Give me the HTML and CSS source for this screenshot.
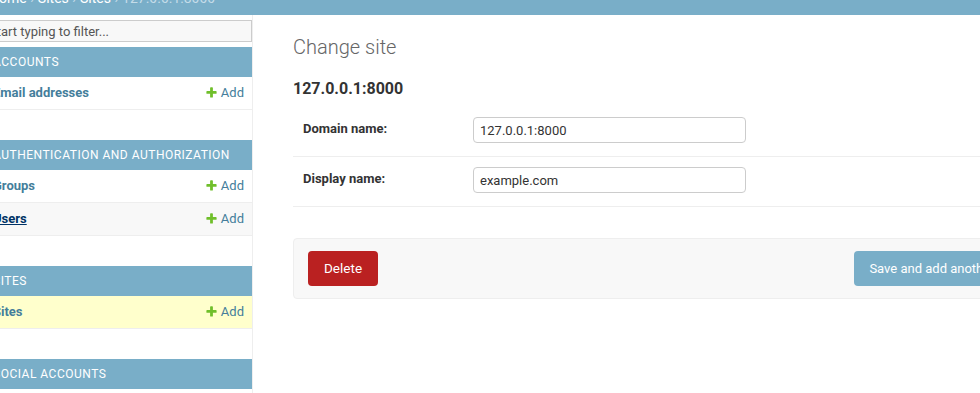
FILE: index.html
```html
<!DOCTYPE html>
<html lang="en">
<head>
<meta charset="utf-8">
<title>Change site | Django site admin</title>
<link rel="stylesheet" href="styles.css">
</head>
<body>
<div class="page">
  <div class="breadcrumbs">
    <a href="#">Home</a> › <a href="#">Sites</a> › <a href="#">Sites</a> › 127.0.0.1:8000
  </div>
  <div class="main">
    <nav class="sidebar">
      <input class="nav-filter" type="search" placeholder="Start typing to filter...">
      <div class="module">
        <div class="caption"><a href="#">Accounts</a></div>
        <div class="model-row">
          <a class="model-link" href="#">Email addresses</a>
          <a class="addlink" href="#"><svg width="13" height="13" viewBox="0 0 1792 1792"><path fill="#70bf2b" d="M1600 796v192q0 40-28 68t-68 28h-416v416q0 40-28 68t-68 28h-192q-40 0-68-28t-28-68v-416h-416q-40 0-68-28t-28-68v-192q0-40 28-68t68-28h416v-416q0-40 28-68t68-28h192q40 0 68 28t28 68v416h416q40 0 68 28t28 68z"/></svg>Add</a>
        </div>
      </div>
      <div class="module">
        <div class="caption"><a href="#">Authentication and Authorization</a></div>
        <div class="model-row">
          <a class="model-link" href="#">Groups</a>
          <a class="addlink" href="#"><svg width="13" height="13" viewBox="0 0 1792 1792"><path fill="#70bf2b" d="M1600 796v192q0 40-28 68t-68 28h-416v416q0 40-28 68t-68 28h-192q-40 0-68-28t-28-68v-416h-416q-40 0-68-28t-28-68v-192q0-40 28-68t68-28h416v-416q0-40 28-68t68-28h192q40 0 68 28t28 68v416h416q40 0 68 28t28 68z"/></svg>Add</a>
        </div>
        <div class="model-row hovered">
          <a class="model-link" href="#">Users</a>
          <a class="addlink" href="#"><svg width="13" height="13" viewBox="0 0 1792 1792"><path fill="#70bf2b" d="M1600 796v192q0 40-28 68t-68 28h-416v416q0 40-28 68t-68 28h-192q-40 0-68-28t-28-68v-416h-416q-40 0-68-28t-28-68v-192q0-40 28-68t68-28h416v-416q0-40 28-68t68-28h192q40 0 68 28t28 68v416h416q40 0 68 28t28 68z"/></svg>Add</a>
        </div>
      </div>
      <div class="module">
        <div class="caption"><a href="#">Sites</a></div>
        <div class="model-row current">
          <a class="model-link" href="#">Sites</a>
          <a class="addlink" href="#"><svg width="13" height="13" viewBox="0 0 1792 1792"><path fill="#70bf2b" d="M1600 796v192q0 40-28 68t-68 28h-416v416q0 40-28 68t-68 28h-192q-40 0-68-28t-28-68v-416h-416q-40 0-68-28t-28-68v-192q0-40 28-68t68-28h416v-416q0-40 28-68t68-28h192q40 0 68 28t28 68v416h416q40 0 68 28t28 68z"/></svg>Add</a>
        </div>
      </div>
      <div class="module">
        <div class="caption"><a href="#">Social Accounts</a></div>
        <div class="model-row">
          <a class="model-link" href="#">Social accounts</a>
          <a class="addlink" href="#">Add</a>
        </div>
      </div>
    </nav>
    <div class="content">
      <h1>Change site</h1>
      <h2>127.0.0.1:8000</h2>
      <fieldset class="fields">
        <div class="form-row">
          <label class="required" for="id_domain">Domain name:</label>
          <input class="text-field" id="id_domain" type="text" value="127.0.0.1:8000">
        </div>
        <div class="form-row">
          <label class="required" for="id_name">Display name:</label>
          <input class="text-field" id="id_name" type="text" value="example.com">
        </div>
      </fieldset>
      <div class="submit-row">
        <a class="deletelink" href="#">Delete</a>
        <div class="save-group">
          <button class="btn" type="button">Save and add another</button>
          <button class="btn" type="button">Save and continue editing</button>
          <button class="btn default" type="button">SAVE</button>
        </div>
      </div>
    </div>
  </div>
</div>
</body>
</html>
```

FILE: styles.css
```css
html, body {
  margin: 0;
  padding: 0;
  overflow: hidden;
  background: #fff;
}

body {
  font-family: Roboto, "Liberation Sans", Arial, sans-serif;
  font-size: 14px;
  color: #333;
}

a {
  text-decoration: none;
  color: #447e9b;
}

.page {
  width: 1340px;
  margin-left: -15px;
  margin-top: -21px;
}

.breadcrumbs {
  background: #79aec8;
  color: #c4dce8;
  padding: 10px 40px 8px 4px;
  line-height: 18px;
  font-size: 14px;
  white-space: nowrap;
}

.breadcrumbs a {
  color: #fff;
}

.main {
  display: flex;
  align-items: stretch;
  min-height: 420px;
}

.sidebar {
  flex: 0 0 267px;
  border-right: 1px solid #eee;
}

.nav-filter {
  display: block;
  box-sizing: border-box;
  width: 100%;
  height: 22px;
  margin: 5px 0;
  padding: 2px 3px;
  border: 1px solid #ccc;
  background: #f8f8f8;
  font-family: Roboto, "Liberation Sans", Arial, sans-serif;
  font-size: 13px;
  color: #333;
  outline: none;
}

.nav-filter::placeholder {
  color: #555;
}

.module {
  margin-bottom: 30px;
}

.caption {
  background: #79aec8;
  padding: 8px;
  line-height: 14px;
  font-size: 12px;
  letter-spacing: 0.5px;
  text-transform: uppercase;
  white-space: nowrap;
}

.caption a {
  color: #fff;
}

.model-row {
  display: flex;
  justify-content: space-between;
  align-items: center;
  padding: 8px;
  line-height: 16px;
  font-size: 13px;
  border-bottom: 1px solid #eee;
}

.model-link {
  font-weight: bold;
}

.model-row.hovered {
  background: #f8f8f8;
}

.model-row.hovered .model-link {
  color: #036;
  text-decoration: underline;
}

.model-row.current {
  background: #ffc;
}

.addlink {
  display: flex;
  align-items: center;
}

.addlink svg {
  margin-right: 3px;
  margin-top: -1px;
}

.content {
  flex: 1;
  padding: 20px 40px;
  min-width: 0;
}

h1 {
  margin: 0 0 20px;
  font-size: 20px;
  line-height: 24px;
  font-weight: 300;
  color: #666;
}

h2 {
  margin: 0 0 8px;
  font-size: 16px;
  line-height: 20px;
  font-weight: bold;
  color: #333;
}

.fields {
  border: none;
  margin: 0 0 31px;
  padding: 0;
  min-width: 0;
}

.form-row {
  display: flex;
  align-items: flex-start;
  padding: 10px;
  height: 29px;
  border-bottom: 1px solid #eee;
  font-size: 13px;
}

.form-row label {
  flex: 0 0 170px;
  box-sizing: border-box;
  padding: 4px 10px 0 0;
  line-height: 16px;
  font-weight: bold;
  color: #333;
}

.text-field {
  box-sizing: border-box;
  width: 273px;
  height: 26px;
  padding: 5px 6px;
  border: 1px solid #ccc;
  border-radius: 4px;
  font-family: Roboto, "Liberation Sans", Arial, sans-serif;
  font-size: 13px;
  color: #333;
  background: #fff;
}

.submit-row {
  display: flex;
  align-items: center;
  padding: 12px 14px;
  border: 1px solid #eee;
  border-radius: 4px;
  background: #f8f8f8;
}

.deletelink {
  display: block;
  background: #ba2121;
  color: #fff;
  border-radius: 4px;
  padding: 10px 16px;
  line-height: 15px;
  font-size: 13.5px;
}

.save-group {
  display: flex;
  gap: 10px;
  margin-left: auto;
}

.btn {
  border: none;
  border-radius: 4px;
  background: #79aec8;
  color: #fff;
  padding: 10px 15px;
  line-height: 15px;
  font-family: Roboto, "Liberation Sans", Arial, sans-serif;
  font-size: 13px;
}

.btn.default {
  background: #417690;
  font-weight: bold;
}
```
